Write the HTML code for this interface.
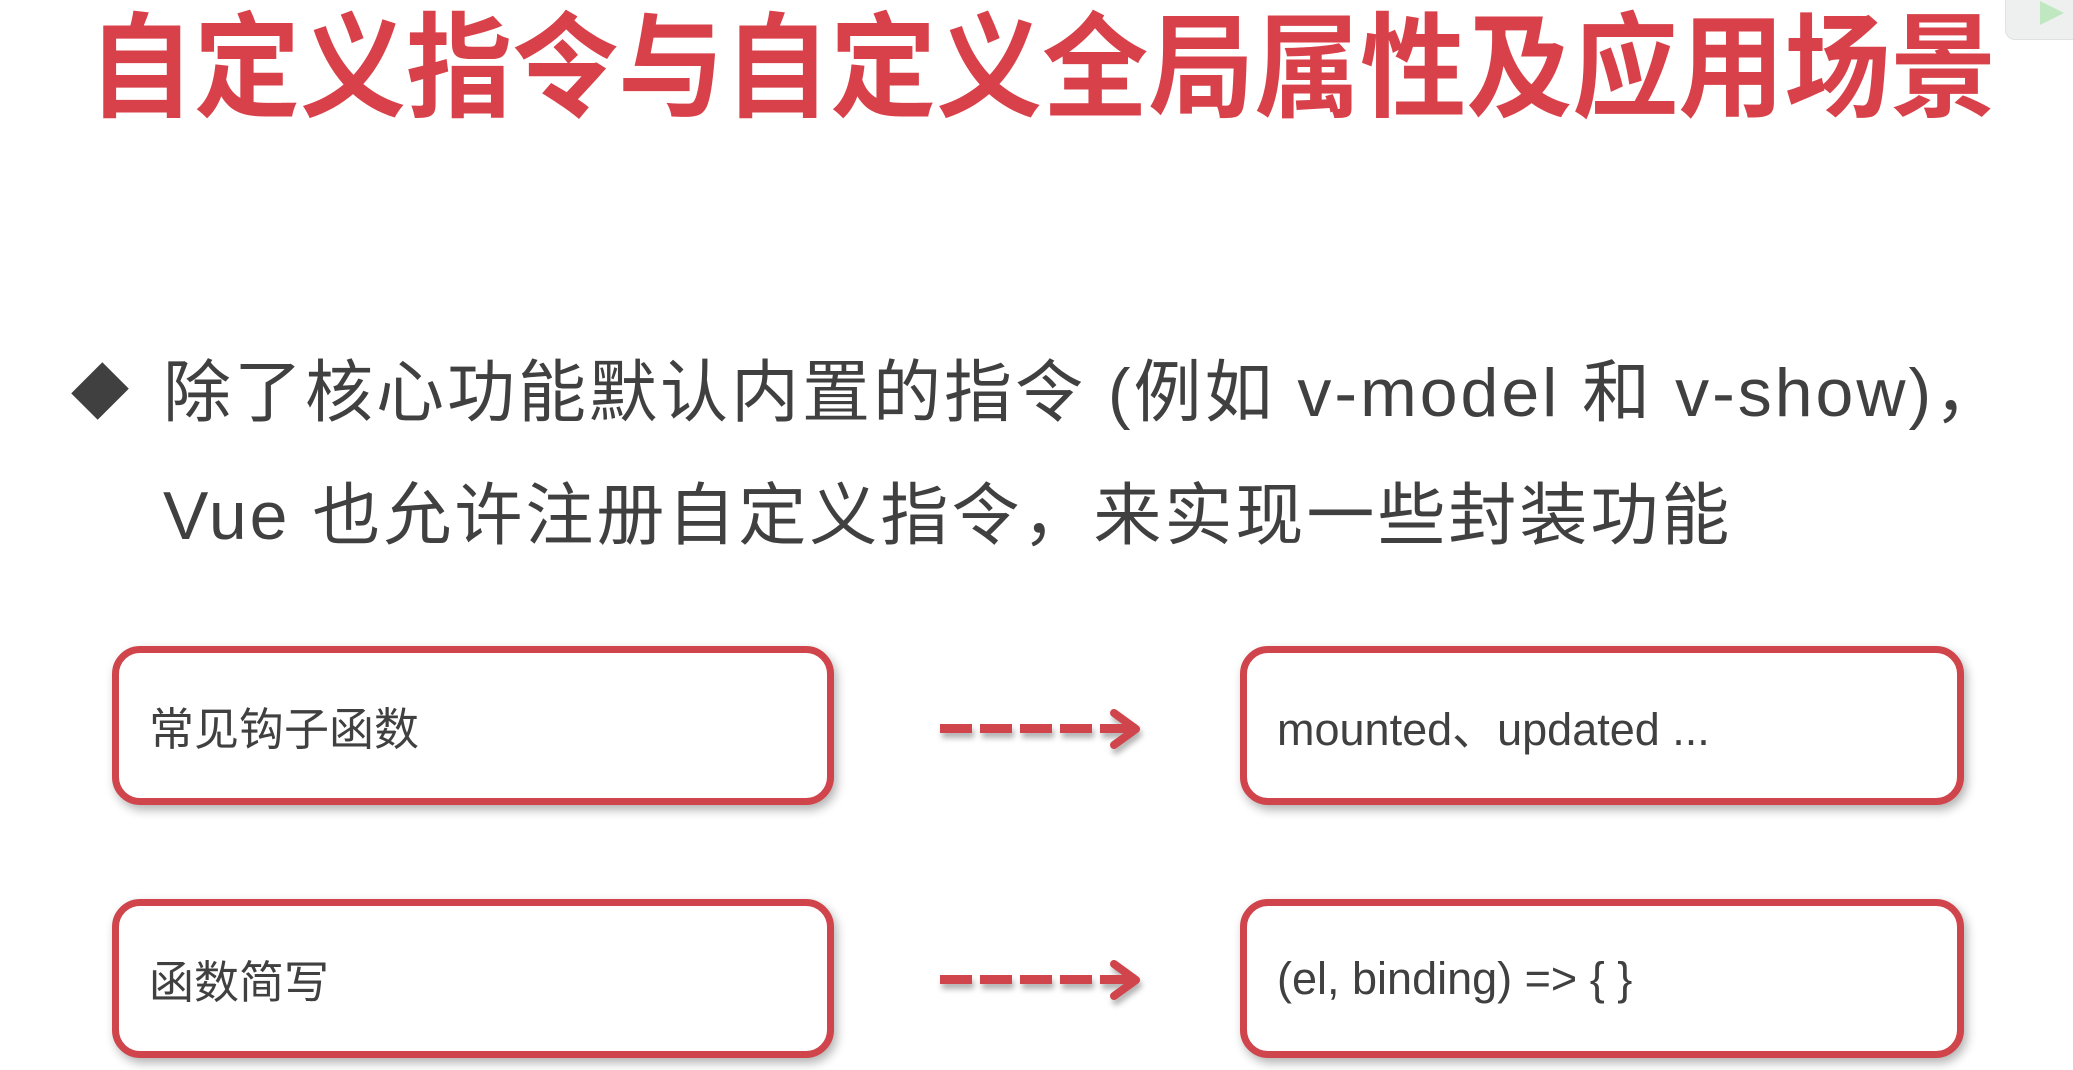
<!DOCTYPE html>
<html><head><meta charset="utf-8"><style>
*{margin:0;padding:0;box-sizing:border-box}
body{width:2073px;height:1070px;background:#fff;position:relative;overflow:hidden;font-family:"Liberation Sans","Noto Sans CJK SC",sans-serif;color:#404040}
.title{position:absolute;left:88px;top:-6px;font-size:114px;font-weight:700;color:#d9414a;white-space:nowrap;line-height:130px;font-family:"Noto Sans CJK SC",sans-serif;transform:scaleX(.93);transform-origin:0 0}
.diamond{position:absolute;left:78px;top:369px;width:44px;height:44px;background:#404040;transform:rotate(45deg) scaleX(.85)}
.line{position:absolute;left:163px;font-size:68px;white-space:nowrap;line-height:80px;letter-spacing:3px}
.box{position:absolute;border:7px solid #d0444c;border-radius:28px;background:#fff;box-shadow:3px 5px 10px rgba(0,0,0,.3);font-size:45px;padding-left:30px;display:flex;align-items:center;white-space:nowrap}
.arrow{position:absolute;left:938px;width:210px;height:40px;filter:drop-shadow(2px 5px 3px rgba(0,0,0,.3))}
.corner{position:absolute;left:2005px;top:-10px;width:80px;height:50px;background:#eef0ef;border-radius:10px;border:1px solid #e0e2e2}
</style></head><body>
<div class="title">自定义指令与自定义全局属性及应用场景</div>
<div class="corner"><svg width="40" height="40" style="position:absolute;left:30px;top:8px"><polygon points="4,2 28,14 4,26" fill="#bfe8c0"/></svg></div>
<div class="diamond"></div>
<div class="line" style="top:353px">除了核心功能默认内置的指令 (例如 v-model 和 v-show)，</div>
<div class="line" style="top:476px">Vue 也允许注册自定义指令，来实现一些封装功能</div>
<div class="box" style="left:112px;top:646px;width:722px;height:159px">常见钩子函数</div>
<div class="box" style="left:112px;top:899px;width:722px;height:159px">函数简写</div>
<div class="box" style="left:1240px;top:646px;width:724px;height:159px">mounted、updated ...</div>
<div class="box" style="left:1240px;top:899px;width:724px;height:159px">(el, binding) =&gt; { }</div>
<svg class="arrow" style="top:709px" viewBox="0 0 210 40"><g fill="#d0444c"><rect x="2" y="15" width="32" height="9"/><rect x="42" y="15" width="32" height="9"/><rect x="82" y="15" width="32" height="9"/><rect x="122" y="15" width="32" height="9"/><rect x="162" y="15" width="30" height="9"/></g><polyline points="176,4 198,20 176,36" fill="none" stroke="#d0444c" stroke-width="8" stroke-linecap="round" stroke-linejoin="round"/></svg>
<svg class="arrow" style="top:960px" viewBox="0 0 210 40"><g fill="#d0444c"><rect x="2" y="15" width="32" height="9"/><rect x="42" y="15" width="32" height="9"/><rect x="82" y="15" width="32" height="9"/><rect x="122" y="15" width="32" height="9"/><rect x="162" y="15" width="30" height="9"/></g><polyline points="176,4 198,20 176,36" fill="none" stroke="#d0444c" stroke-width="8" stroke-linecap="round" stroke-linejoin="round"/></svg>
</body></html>
